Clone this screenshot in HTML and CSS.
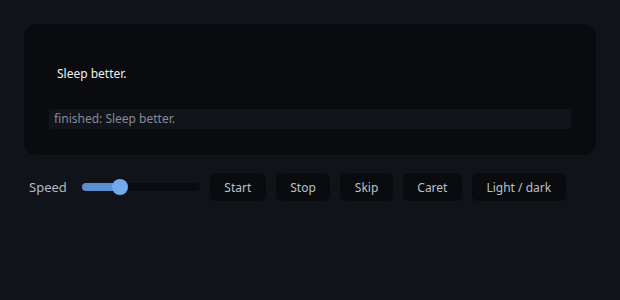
FILE: index.html
```html
<!DOCTYPE html>
<html lang="en">
<head>
    <meta charset="UTF-8">
    <meta name="viewport" content="width=device-width, initial-scale=1.0">
    <title>Reader</title>
    <link rel="stylesheet" href="styles.css">
</head>
<body>
    <div class="reader">
        <div class="text" id="text">Sleep better.</div>
        <div class="status" id="status">finished: Sleep better.</div>
    </div>

    <div class="controls">
        <label for="speed">Speed</label>
        <input type="range" id="speed" min="0" max="100" value="30">
        <button id="start">Start</button>
        <button id="stop">Stop</button>
        <button id="skip">Skip</button>
        <button id="caret">Caret</button>
        <button id="theme">Light / dark</button>
    </div>
</body>
</html>
```

FILE: styles.css
```css
body {
    margin: 0;
    padding: 24px;
    background: #11131b;
    color: #e6e8ec;
    font-family: 'Noto Sans', 'Open Sans', sans-serif;
    font-size: 12px;
}

.reader {
    background: #0a0b0f;
    border-radius: 12px;
    padding: 25px 25px 26px;
}

.text {
    padding: 17px 8px 15px;
    line-height: 16px;
    color: #eef0f3;
    margin-bottom: 12px;
}

.status {
    background: #12141c;
    color: #868a95;
    height: 20px;
    line-height: 20px;
    padding: 0 5px;
}

.controls {
    display: flex;
    align-items: center;
    gap: 10px;
    margin-top: 18px;
    padding-left: 5px;
}

label {
    color: #b4b8c2;
    font-size: 13px;
    margin-right: 5px;
}

input[type="range"] {
    -webkit-appearance: none;
    appearance: none;
    width: 118px;
    height: 8px;
    margin: 0;
    border-radius: 4px;
    background: linear-gradient(to right, #5b8fd2 0%, #5b8fd2 32%, #0a0b0f 32%, #0a0b0f 100%);
}

input[type="range"]::-webkit-slider-thumb {
    -webkit-appearance: none;
    width: 16px;
    height: 16px;
    border-radius: 50%;
    background: #72aaec;
    border: none;
}

button {
    height: 28px;
    padding: 0 14.5px;
    background: #0a0b0f;
    color: #bcc0c8;
    border: none;
    border-radius: 6px;
    font-family: inherit;
    font-size: 12px;
    cursor: pointer;
}

button:hover {
    background: #15171f;
}
```
